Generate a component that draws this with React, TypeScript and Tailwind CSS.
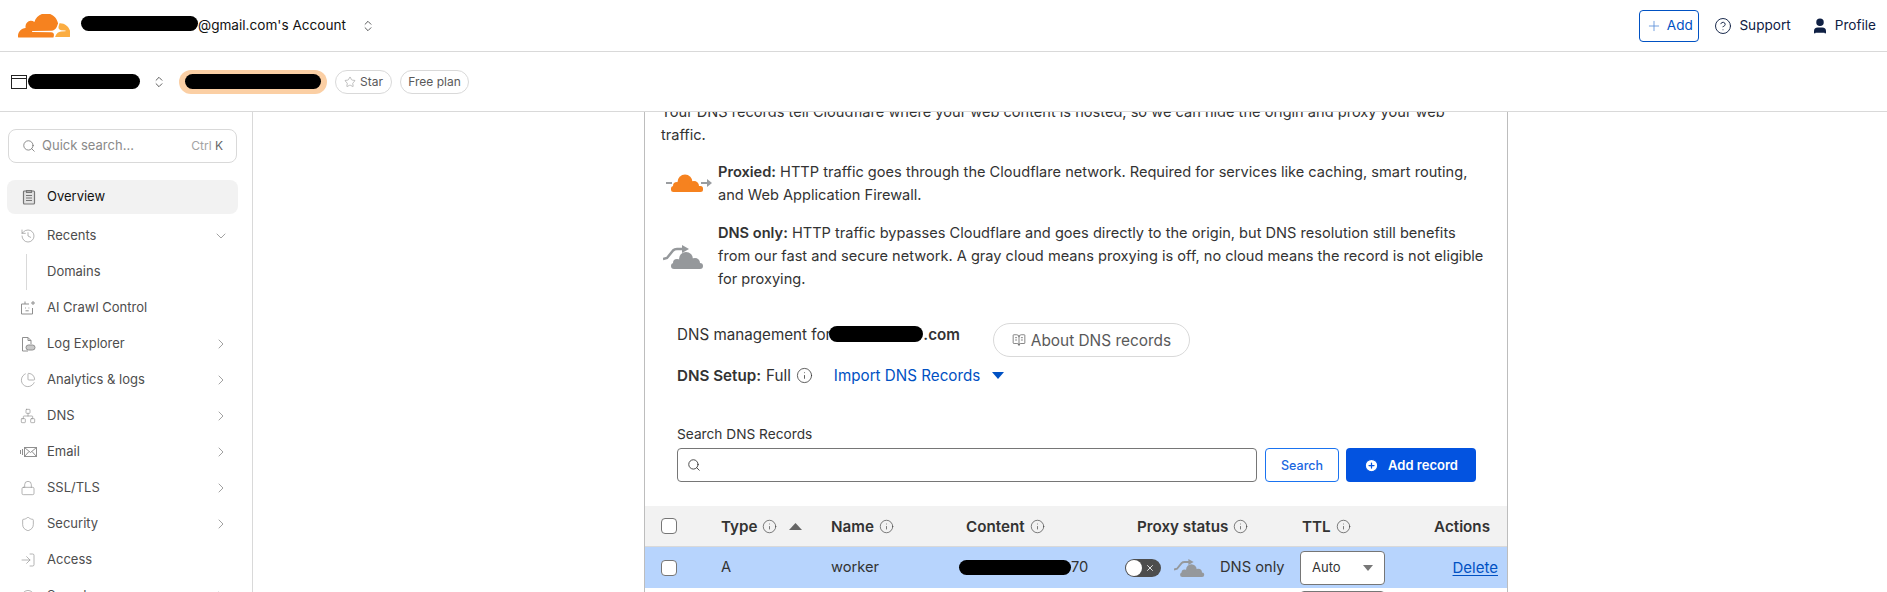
import { Search, ChevronDown, ChevronRight, ChevronsUpDown, Star, Plus, CircleHelp, User, History, PieChart, Network, Lock, Shield, LogIn, Gauge, Info, BookOpenText, CirclePlus, X } from 'lucide-react';
import type { ReactNode } from 'react';

const CLOUD_A = 'M16.5088 16.8447c.1475-.5068.0908-.9707-.1553-1.3154-.2246-.3164-.6045-.499-1.0615-.5205l-8.6592-.1123a.1559.1559 0 0 1-.1333-.0713c-.0283-.042-.0351-.0986-.021-.1553.0278-.084.1123-.1484.2036-.1562l8.7359-.1123c1.0351-.0489 2.1601-.8868 2.5537-1.9136l.499-1.3013c.0215-.0561.0293-.1123.0147-.168-.5625-2.5463-2.835-4.4453-5.5499-4.4453-2.5039 0-4.6284 1.6177-5.3876 3.8614-.4927-.3658-1.1187-.5625-1.794-.499-1.2026.119-2.1665 1.083-2.2861 2.2856-.0283.31-.0069.6128.0635.894C1.5683 13.171 0 14.7754 0 16.752c0 .1748.0142.3515.0352.5273.0141.083.0844.1475.1689.1475h15.9814c.0909 0 .1758-.0645.2032-.1553l.12-.4268z';
const CLOUD_B = 'M19.4668 11.0273c-.0771 0-.1611 0-.2383.0137-.0566 0-.1065.042-.1279.0986l-.3379 1.1738c-.1475.5068-.0918.9707.1543 1.3164.2256.3164.6055.498 1.0625.5195l1.8437.1123c.0557 0 .1055.0283.1329.0713.0283.042.0351.1055.021.1553-.0283.084-.1132.1485-.204.1563l-1.921.1123c-1.041.0488-2.1582.8867-2.5527 1.914l-.1406.3585c-.0283.0713.0215.1416.0986.1416h6.5977c.0771 0 .1474-.0489.169-.126.1122-.4082.1757-.837.1757-1.2803 0-2.6025-2.125-4.727-4.7344-4.727';

function Logo() {
  return (
    <svg className="w-[52px] h-[24px]" viewBox="0 6.9 24 10.7" preserveAspectRatio="none">
      <path fill="#f6821f" d={CLOUD_A} />
      <path fill="#fbad41" d={CLOUD_B} />
    </svg>
  );
}

function Redacted({ className }: { className: string }) {
  return <span className={`inline-block bg-black rounded-full ${className}`} />;
}

function OverviewIcon() {
  return (
    <svg className="w-4 h-4" viewBox="0 0 16 16" fill="none" stroke="#777" strokeWidth="1.2">
      <rect x="2.5" y="2" width="11" height="13" rx="1" fill="#e2e2e2" />
      <path d="M5.5 1.5h5v2h-5zM5 6.5h6M5 9h6M5 11.5h6" />
    </svg>
  );
}

function CrawlIcon() {
  return (
    <svg className="w-4 h-4" viewBox="0 0 16 16" fill="none" stroke="#8f8f8f" strokeWidth="1">
      <path d="M9 4H1.5v10h11V8" />
      <path d="M5 1.5V4M13 1v4M11 3h4" />
      <path d="M5 8h.8M8.5 8h.8M5.5 10.8h3.2" />
    </svg>
  );
}

function LogIcon() {
  return (
    <svg className="w-4 h-4" viewBox="0 0 16 16" fill="none" stroke="#8f8f8f" strokeWidth="1">
      <path d="M8 15H2.5V1.5H8L11 4.500V8" />
      <path d="M8 1.500v3h3" />
      <rect x="6" y="9" width="9" height="5" rx="2.500" fill="#c9c9c9" />
    </svg>
  );
}

function EmailIcon() {
  return (
    <svg className="w-[17px] h-4" viewBox="0 0 17 16" fill="none" stroke="#8f8f8f" strokeWidth="1">
      <rect x="4.500" y="3.500" width="12" height="9" />
      <path d="M4.500 3.500l6 5 6-5M4.500 12.500l4.500-5M16.500 12.500l-4.500-5M.5 6v4M2.500 5v6" />
    </svg>
  );
}

function SideItem({ icon, label, chevron }: { icon: ReactNode; label: string; chevron?: 'right' | 'down' }) {
  return (
    <div className="h-9 flex items-center pl-5 pr-[23px] text-[#4d4d4d] text-[13px] shrink-0">
      <span className="w-[27px] flex items-center text-[#8f8f8f]">{icon}</span>
      <span>{label}</span>
      {chevron === 'right' && <ChevronRight className="w-4 h-4 ml-auto text-[#8f8f8f]" strokeWidth={1.25} />}
      {chevron === 'down' && <ChevronDown className="w-4 h-4 ml-auto text-[#8f8f8f]" strokeWidth={1.25} />}
    </div>
  );
}

function Sidebar() {
  return (
    <aside className="w-[253px] shrink-0 border-r border-[#d9d9d9] pt-[17px] overflow-hidden">
      <div className="mx-2 w-[229px] h-[34px] border border-[#d9d9d9] rounded-lg flex items-center px-[13px] text-[13px] text-[#8a8a8a]">
        <Search className="w-[14px] h-[14px] mr-[6px] text-[#666]" strokeWidth={1.25} />
        <span>Quick search...</span>
        <span className="ml-auto text-[12px] text-[#a3a3a3]">Ctrl <span className="text-[#666]">K</span></span>
      </div>
      <div className="mt-[17px] ml-[7px] mr-[14px] h-[34px] bg-[#f2f2f2] rounded-lg flex items-center pl-[14px] text-[13px] text-[#111]">
        <span className="w-[26px]"><OverviewIcon /></span>
        <span>Overview</span>
      </div>
      <div className="mt-1">
        <SideItem icon={<History className="w-4 h-4" strokeWidth={1} />} label="Recents" chevron="down" />
        <div className="ml-[26px] h-9 border-l border-[#d9d9d9] pl-5 flex items-center text-[13px] text-[#4d4d4d]">Domains</div>
        <SideItem icon={<CrawlIcon />} label="AI Crawl Control" />
        <SideItem icon={<LogIcon />} label="Log Explorer" chevron="right" />
        <SideItem icon={<PieChart className="w-4 h-4" strokeWidth={1} />} label="Analytics & logs" chevron="right" />
        <SideItem icon={<Network className="w-4 h-4" strokeWidth={1} />} label="DNS" chevron="right" />
        <SideItem icon={<EmailIcon />} label="Email" chevron="right" />
        <SideItem icon={<Lock className="w-4 h-4" strokeWidth={1} />} label="SSL/TLS" chevron="right" />
        <SideItem icon={<Shield className="w-4 h-4" strokeWidth={1} />} label="Security" chevron="right" />
        <SideItem icon={<LogIn className="w-4 h-4" strokeWidth={1} />} label="Access" />
        <SideItem icon={<Gauge className="w-4 h-4" strokeWidth={1} />} label="Speed" chevron="right" />
      </div>
    </aside>
  );
}

function ProxiedIcon() {
  return (
    <svg className="w-[48px] h-[22px]" viewBox="0 0 48 22">
      <path d="M1 10h6M36 10h7" stroke="#9a9da0" strokeWidth="2" />
      <path d="M42 6l5 4-5 4z" fill="#9a9da0" />
      <g fill="#f6821f">
        <circle cx="20" cy="9" r="7.500" />
        <circle cx="12" cy="13" r="4" />
        <circle cx="29" cy="13" r="5" />
        <rect x="6" y="13" width="32" height="6" rx="2.500" />
      </g>
    </svg>
  );
}

function GrayCloud({ className }: { className: string }) {
  return (
    <svg className={className} viewBox="0 0 41 26" fill="#95989b">
      <path d="M0 15l4-1 6-7.500C11 5.500 12 5 14 5h6" fill="none" stroke="#95989b" strokeWidth="2.500" />
      <path d="M19 1l7 4-7 4z" />
      <circle cx="23" cy="15" r="7" />
      <circle cx="14" cy="19" r="4" />
      <circle cx="32" cy="19" r="5" />
      <rect x="8" y="19" width="32" height="6" rx="3" />
    </svg>
  );
}

function Tip() {
  return <Info className="w-[15px] h-[15px] text-[#444]" strokeWidth={1.1} />;
}

function Check() {
  return <span className="w-4 h-4 rounded-[4px] border border-[#767676] bg-white inline-block" />;
}

function AutoSelect() {
  return (
    <div className="w-[85px] h-[34px] bg-white border border-[#767676] rounded-[4px] flex items-center pl-[11px] pr-[11px] text-[13px] text-[#333]">
      Auto
      <svg className="ml-auto w-[10px] h-[6px]" viewBox="0 0 10 6"><path d="M0 0h10L5 6z" fill="#777" /></svg>
    </div>
  );
}

function DnsTable() {
  return (
    <div className="mt-6 text-[14.7px]">
      <div className="h-[41px] bg-[#f2f2f2] border-b border-[#d9d9d9] grid grid-cols-[76px_110px_135px_159px_175px_100px_1fr] items-center font-semibold text-[15.2px] text-[#333]">
        <span className="pl-4 flex"><Check /></span>
        <span className="flex items-center gap-[5px]">Type <Tip /><svg className="ml-[7px] w-[13px] h-[7px]" viewBox="0 0 13 7"><path d="M0 7h13L6.500 0z" fill="#666" /></svg></span>
        <span className="flex items-center gap-[5px]">Name <Tip /></span>
        <span className="flex items-center gap-[5px]">Content <Tip /></span>
        <span className="pl-3 flex items-center gap-[5px]">Proxy status <Tip /></span>
        <span className="flex items-center gap-[5px] pl-[2px]">TTL <Tip /></span>
        <span className="justify-self-end pr-[17px]">Actions</span>
      </div>
      <div className="h-[41px] bg-[#b7d4fd] grid grid-cols-[76px_110px_135px_159px_175px_100px_1fr] items-center text-[#333]">
        <span className="pl-4 flex"><Check /></span>
        <span>A</span>
        <span>worker</span>
        <span className="flex items-center -ml-[7px]"><Redacted className="w-[112px] h-[15px]" /><span>70</span></span>
        <span className="flex items-center">
          <span className="w-9 h-[18px] rounded-full bg-[#4d4d4d] flex items-center px-[1px]">
            <span className="w-4 h-4 rounded-full bg-white" />
            <X className="w-[10px] h-[10px] text-white ml-[3px]" strokeWidth={2} />
          </span>
          <GrayCloud className="ml-[13px] w-[31px] h-[20px]" />
          <span className="ml-[15px]">DNS only</span>
        </span>
        <span><AutoSelect /></span>
        <span className="text-[15px] text-[#0051c3] underline underline-offset-2 justify-self-end pr-[9px]">Delete</span>
      </div>
      <div className="h-[41px] grid grid-cols-[655px_1fr] pt-[3px]">
        <span />
        <AutoSelect />
      </div>
    </div>
  );
}

function Card() {
  return (
    <div className="w-[864px] ml-[391px] shrink-0 h-[600px] border-x border-[#bdbdbd] text-[#333] text-[14.6px] leading-[23px]">
      <div className="-mt-[11px] pl-4 pr-[18px]">
        <p>Your DNS records tell Cloudflare where your web content is hosted, so we can hide the origin and proxy your web<br />traffic.</p>
        <div className="mt-[14px] flex items-center">
          <span className="w-[57px] pl-[4px] flex shrink-0"><ProxiedIcon /></span>
          <p><b className="font-semibold">Proxied:</b> HTTP traffic goes through the Cloudflare network. Required for services like caching, smart routing,<br />and Web Application Firewall.</p>
        </div>
        <div className="mt-[15px] flex items-center">
          <span className="w-[57px] pl-[2px] flex shrink-0"><GrayCloud className="w-[41px] h-[26px]" /></span>
          <p><b className="font-semibold">DNS only:</b> HTTP traffic bypasses Cloudflare and goes directly to the origin, but DNS resolution still benefits<br />from our fast and secure network. A gray cloud means proxying is off, no cloud means the record is not eligible<br />for proxying.</p>
        </div>
      </div>
      <div className="mt-[34px] pl-8 pr-[31px] text-[15.2px]">
        <div className="flex items-start">
          <span className="flex items-center h-5 mt-[-1px]">DNS management for<Redacted className="w-[94px] h-4 -ml-[2px]" /><b className="font-semibold">.com</b></span>
          <span className="ml-[33px] -mt-[2px] h-[34px] w-[197px] border border-[#d9d9d9] rounded-full flex items-center justify-center gap-[5px] text-[15.4px] text-[#595959]">
            <BookOpenText className="w-[14px] h-[14px]" strokeWidth={1.25} />About DNS records
          </span>
        </div>
        <div className="mt-2 flex items-center h-5">
          <b className="font-semibold">DNS Setup:</b>
          <span className="ml-[5px]">Full</span>
          <Info className="ml-[5px] w-[17px] h-[17px] text-[#333]" strokeWidth={1.1} />
          <span className="ml-[21px] text-[#0051c3]">Import DNS Records</span>
          <svg className="ml-[12px] w-[12px] h-[7px]" viewBox="0 0 12 7"><path d="M0 0h12L6 7z" fill="#0051c3" /></svg>
        </div>
        <div className="mt-[39px] text-[13.7px] leading-5">Search DNS Records</div>
        <div className="mt-[4px] flex items-center">
          <div className="w-[580px] h-[34px] border border-[#767676] rounded-[4px] flex items-center pl-[9px]">
            <Search className="w-[14px] h-[14px] text-[#333]" strokeWidth={1.5} />
          </div>
          <span className="ml-2 w-[74px] h-[34px] border border-[#1a73f0] rounded-[4px] flex items-center justify-center text-[12.5px] font-medium text-[#1a66e0]">Search</span>
          <span className="ml-[7px] w-[130px] h-[34px] bg-[#0353e0] rounded-[4px] flex items-center justify-center gap-[9px] text-[13px] font-semibold text-white">
            <CirclePlus className="w-[15px] h-[15px] fill-white stroke-[#0353e0]" />Add record
          </span>
        </div>
      </div>
      <DnsTable />
    </div>
  );
}

export default function App() {
  return (
    <div className="h-[592px] overflow-hidden flex flex-col bg-white font-[Inter,sans-serif] text-[#1d1f20]">
      <header className="h-[52px] shrink-0 border-b border-[#d9d9d9] flex items-center pl-[18px] pr-[11px] text-[13.6px]">
        <Logo />
        <Redacted className="ml-[11px] w-[117px] h-[15px] -mt-[5px]" />
        <span className="text-[#111]">@gmail.com's Account</span>
        <ChevronsUpDown className="ml-[15px] w-[14px] h-[14px]" strokeWidth={1.25} />
        <span className="ml-auto h-8 w-[60px] border border-[#0051c3] rounded-[4px] flex items-center justify-center gap-[5px] text-[#0051c3]">
          <Plus className="w-4 h-4 text-[#5a8fd8]" strokeWidth={1.25} />Add
        </span>
        <CircleHelp className="ml-[15px] w-[18px] h-[18px] text-[#0f2044]" strokeWidth={1.25} />
        <span className="ml-[7px] text-[#0f2044]">Support</span>
        <User className="ml-[20px] w-[18px] h-[18px] text-[#0f2044] fill-[#0f2044]" />
        <span className="ml-[6px] text-[#0f2044]">Profile</span>
      </header>
      <div className="h-[60px] shrink-0 border-b border-[#d9d9d9] flex items-center pl-[11px] text-[12px] text-[#595959]">
        <svg className="w-4 h-[14px]" viewBox="0 0 16 14" fill="none" stroke="#222"><rect x=".5" y=".5" width="15" height="13" /><path d="M.5 3.500h15" /></svg>
        <Redacted className="ml-[1px] w-[112px] h-[15px]" />
        <ChevronsUpDown className="ml-[12px] w-[14px] h-[14px] text-[#222]" strokeWidth={1.25} />
        <span className="ml-[13px] w-[148px] h-6 rounded-full bg-[#fbcfa4] flex items-center justify-center">
          <Redacted className="w-[136px] h-[15px]" />
        </span>
        <span className="ml-2 w-[57px] h-6 border border-[#d9d9d9] rounded-full flex items-center justify-center gap-1">
          <Star className="w-3 h-3 text-[#999]" strokeWidth={1.25} />Star
        </span>
        <span className="ml-2 w-[69px] h-6 border border-[#d9d9d9] rounded-full flex items-center justify-center">Free plan</span>
      </div>
      <div className="flex flex-1 min-h-0">
        <Sidebar />
        <main className="flex-1 min-w-0 overflow-hidden">
          <Card />
        </main>
      </div>
    </div>
  );
}
